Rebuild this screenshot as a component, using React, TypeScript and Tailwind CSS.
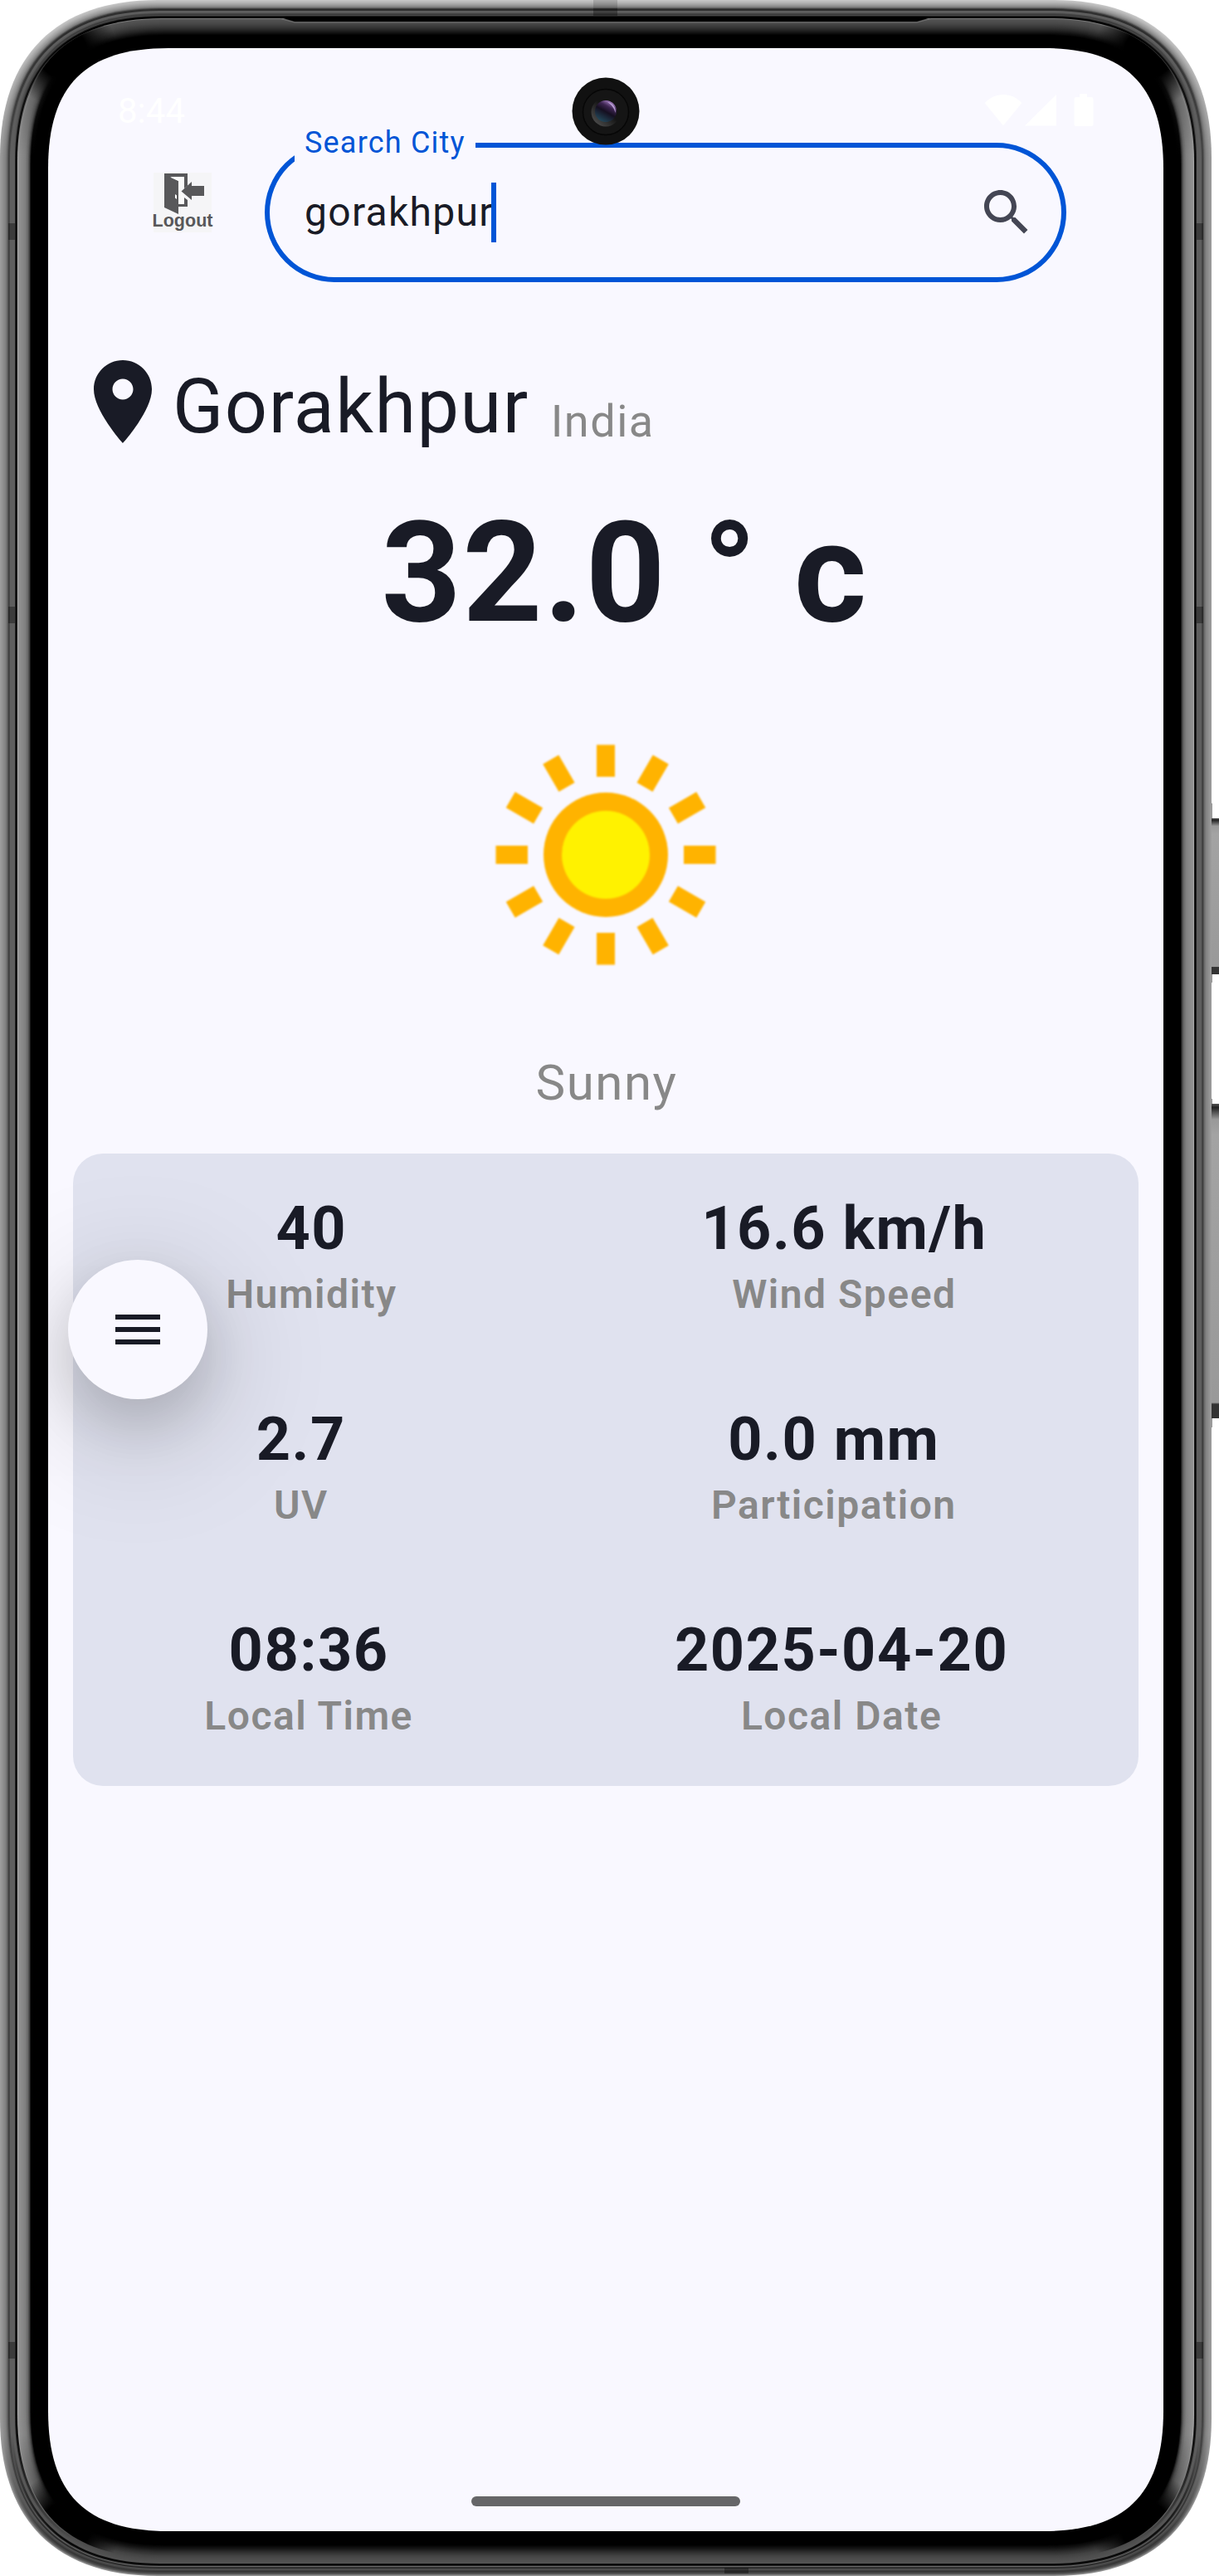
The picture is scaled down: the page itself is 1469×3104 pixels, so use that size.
import React from "react";

type Stop = [number, number];

const SIDE: Stop[] = [[0, 0x9c], [3, 0x90], [6, 0x82], [8, 0x6c], [9, 0x55], [10, 0x40], [11, 0x46], [12, 0x5e], [17, 0x5e], [18, 0x20], [19, 0], [20, 0x18], [21, 0xa8], [22, 0x92], [30, 0x80], [33, 0x68], [35, 0x40], [36, 0x1c], [37, 0], [58, 0]];
const TOP: Stop[] = [[0, 0xc6], [3, 0xb2], [6, 0x98], [8, 0x80], [9, 0x66], [10, 0x40], [11, 0x2c], [12, 0x30], [13, 0x60], [15, 0x5a], [16, 0x44], [17, 0x3a], [18, 0x48], [19, 0x20], [20, 0], [21, 0], [22, 0x78], [23, 0x54], [28, 0x48], [32, 0x38], [36, 0x24], [40, 0x0c], [42, 0], [58, 0]];
const BOTTOM: Stop[] = [[0, 0x92], [1, 0x76], [2, 0x5a], [3, 0x4a], [5, 0x34], [6, 0x40], [8, 0x50], [9, 0x24], [10, 0x36], [11, 0x66], [12, 0x22], [13, 0], [14, 0x10], [15, 0x54], [20, 0x4c], [24, 0x42], [29, 0x2a], [33, 0x12], [37, 0], [58, 0]];

function shade(stops: Stop[], i: number) {
  for (let n = 1; n < stops.length; n++) {
    if (i <= stops[n][0]) {
      const [a, va] = stops[n - 1];
      const [b, vb] = stops[n];
      const v = Math.round(va + ((vb - va) * (i - a)) / (b - a));
      return `rgb(${v},${v},${v})`;
    }
  }
  return "#000";
}

/* Rounded outline with continuous-curvature corners. */
function outline(l: number, t: number, r: number, b: number, e: number, k: number) {
  const c = e * (1 - k);
  return `M${l + e} ${t}H${r - e}C${r - c} ${t} ${r} ${t + c} ${r} ${t + e}V${b - e}C${r} ${b - c} ${r - c} ${b} ${r - e} ${b}H${l + e}C${l + c} ${b} ${l} ${b - c} ${l} ${b - e}V${t + e}C${l} ${t + c} ${l + c} ${t} ${l + e} ${t}Z`;
}

function ring(i: number) {
  return outline(i, i, 1460 - i, 3104 - i, 190 - (i * 45) / 58, 0.646 + (i * 0.044) / 58);
}

const INSETS = Array.from({ length: 43 }, (_, i) => i);
const MARKS = [269, 731, 2822];

function DeviceFrame() {
  return (
    <svg className="absolute left-0 top-0" width="1469" height="3104" viewBox="0 0 1469 3104" aria-hidden="true">
      <defs>
        {INSETS.map((i) => (
          <linearGradient key={i} id={`m${i}`} gradientUnits="userSpaceOnUse" x1="0" y1="0" x2="0" y2="3104">
            <stop offset="0.014" stopColor={shade(TOP, i)} />
            <stop offset="0.06" stopColor={shade(SIDE, i)} />
            <stop offset="0.945" stopColor={shade(SIDE, i)} />
            <stop offset="0.986" stopColor={shade(BOTTOM, i)} />
          </linearGradient>
        ))}
        <linearGradient id="key" x1="0" y1="0" x2="0" y2="1">
          <stop offset="0" stopColor="#555" />
          <stop offset="0.012" stopColor="#222" />
          <stop offset="0.05" stopColor="#999" />
          <stop offset="0.1" stopColor="#a3a3a3" />
          <stop offset="0.95" stopColor="#999" />
          <stop offset="0.955" stopColor="#333" />
          <stop offset="1" stopColor="#333" />
        </linearGradient>
        <radialGradient id="fade">
          <stop offset="0" stopColor="#000" />
          <stop offset="0.45" stopColor="#000" />
          <stop offset="1" stopColor="#000" stopOpacity="0" />
        </radialGradient>
        <clipPath id="bezel">
          <path d={ring(22)} />
        </clipPath>
      </defs>
      <rect x="1459" y="968" width="2" height="216" fill="#999" />
      <rect x="1459" y="1324" width="2" height="396" fill="#999" />
      <rect x="1460" y="986" width="9" height="188" fill="url(#key)" />
      <rect x="1460" y="1330" width="9" height="379" fill="url(#key)" />
      {INSETS.map((i) => (
        <path key={i} d={ring(i)} fill={`url(#m${i})`} />
      ))}
      <g clipPath="url(#bezel)">
        <circle cx="76" cy="64" r="66" fill="url(#fade)" />
        <circle cx="1384" cy="64" r="66" fill="url(#fade)" />
        <circle cx="80" cy="3044" r="66" fill="url(#fade)" />
        <circle cx="1380" cy="3044" r="66" fill="url(#fade)" />
      </g>
      <path d="M338 21H1122L1105 26H355Z" fill="#000" />
      <path d="M338 22.5L355 27H1105L1122 22.5" fill="none" stroke="#6e6e6e" strokeWidth="1.2" />
      {MARKS.map((y) => (
        <g key={y} fill="#000" fillOpacity="0.36">
          <rect x="10" y={y} width="8" height="20" />
          <rect x="1442" y={y} width="8" height="20" />
        </g>
      ))}
      <rect x="715" y="0" width="29" height="10" fill="#000" fillOpacity="0.14" />
      <rect x="715" y="10" width="29" height="9" fill="#000" fillOpacity="0.32" />
      <rect x="873" y="3094" width="29" height="7" fill="#000" fillOpacity="0.36" />
      <path d={outline(58, 58, 1402, 3050, 145, 0.69)} fill="#f9f8ff" />
    </svg>
  );
}

function Camera() {
  return (
    <svg className="absolute left-[631px] top-[35px]" width="82" height="82" viewBox="-41 -41 82 82" aria-hidden="true">
      <defs>
        <linearGradient id="lens" x1="0.8" y1="0.1" x2="0.3" y2="1">
          <stop offset="0" stopColor="#a07abc" />
          <stop offset="0.25" stopColor="#3c2450" />
          <stop offset="0.5" stopColor="#150f20" />
          <stop offset="1" stopColor="#234a5c" />
        </linearGradient>
        <linearGradient id="rim" x1="0" y1="1" x2="1" y2="0">
          <stop offset="0" stopColor="#5a5a5a" />
          <stop offset="0.55" stopColor="#151515" />
        </linearGradient>
      </defs>
      <circle r="40.5" fill="#111" />
      <circle cy="1" r="27.5" fill="#151515" stroke="#060606" strokeWidth="1.4" />
      <circle cy="1" r="17.5" fill="url(#rim)" />
      <circle r="13" fill="url(#lens)" />
      <path d="M2 -11A11 11 0 0 1 11.5 2C10 -4 7 -8 2 -11Z" fill="#cdb6ea" fillOpacity="0.8" />
    </svg>
  );
}

function StatusBar() {
  return (
    <div className="flex h-[114px] shrink-0 items-start justify-between pl-[84px] pr-[84px] pt-[55px] text-white">
      <span className="text-[42px] leading-[42px]">8:44</span>
      <svg width="132" height="40" viewBox="0 0 132 40" fill="currentColor" aria-hidden="true">
        <path d="M23 38.500L.5 11C7 4.500 14.500 1 23 1S39 4.500 45.500 11Z" />
        <path d="M49 38.500H87V1Z" />
        <path d="M115 0H124V4H129Q131.500 4 131.500 6.500V36.500Q131.500 39 129 39H111Q108.500 39 108.500 36.500V6.500Q108.500 4 111 4H115Z" />
      </svg>
    </div>
  );
}

function LogoutButton() {
  return (
    <button className="mt-9 flex h-[72px] w-[70px] shrink-0 flex-col items-center self-start bg-[#f5f5f7] text-[#58585a]">
      <svg className="h-[50px] w-[70px] shrink-0" viewBox="0 0 70 50" aria-hidden="true">
        <path d="M13 1H41V16L37 19V5H20L30 10V38H37V30L41 33V41H30V50L13 42Z" fill="currentColor" />
        <path d="M30 10V37H36.500V29L32.500 22L36.500 16V6H21Z" fill="#fafafa" />
        <path d="M33.500 22.500L46 11V16H61V28H46V33Z" fill="currentColor" />
        <path d="M26 26L28 27.500V32L26 30.500Z" fill="#fff" />
      </svg>
      <span className="font-['Liberation_Sans',sans-serif] text-[21.500px] font-bold leading-[17px]">Logout</span>
    </button>
  );
}

function SearchField() {
  return (
    <div className="relative flex h-[168px] w-[966px] items-center justify-between rounded-full border-[6px] border-[#0055d6] pl-[42px] pr-[30px]">
      <div className="absolute -top-[30px] left-[30px] h-12 w-[218px] bg-[#f9f8ff] pl-3 text-[36px] leading-[48px] tracking-[1.2px] text-[#0055d6]">
        Search City
      </div>
      <div className="flex h-[72px] items-center">
        <span className="text-[48px] leading-[72px] tracking-[1.3px] text-[#191b26]">gorakhpur</span>
        <span className="-ml-[3px] h-[72px] w-[6px] bg-[#0055d6]" />
      </div>
      <svg width="72" height="72" viewBox="0 0 24 24" fill="#444654" aria-hidden="true">
        <path d="M15.500 14h-.79l-.28-.27C15.410 12.590 16 11.110 16 9.500 16 5.910 13.090 3 9.500 3S3 5.910 3 9.500 5.910 16 9.500 16c1.610 0 3.090-.59 4.230-1.570l.27.28v.79l5 4.990L20.490 19l-4.990-5zm-6 0C7.010 14 5 11.990 5 9.500S7.010 5 9.500 5 14 7.010 14 9.500 11.990 14 9.500 14z" />
      </svg>
    </div>
  );
}

const RAYS = Array.from({ length: 12 }, (_, i) => i * 30);

function Sun() {
  return (
    <svg className="shrink-0 self-center blur-[0.8px]" width="480" height="480" viewBox="-240 -241 480 480" aria-hidden="true">
      {RAYS.map((a) => (
        <rect key={a} x="-11" y="-132.500" width="22" height="38.500" fill="#ffb300" transform={`rotate(${a})`} />
      ))}
      <circle r="75" fill="#ffb300" />
      <circle r="53" fill="#fff200" />
    </svg>
  );
}

function Metric({ value, label }: { value: string; label: string }) {
  return (
    <div className="flex flex-col items-center p-12 font-bold tracking-[1.5px]">
      <span className="pl-[1.5px] text-[72px] leading-[86px] text-[#191b26]">{value}</span>
      <span className="pl-[1.5px] text-[48px] font-semibold leading-[72px] text-[#888888]">{label}</span>
    </div>
  );
}

const METRICS = [
  [["40", "Humidity"], ["16.6 km/h", "Wind Speed"]],
  [["2.7", "UV"], ["0.0 mm", "Participation"]],
  [["08:36", "Local Time"], ["2025-04-20", "Local Date"]],
];

export default function App() {
  return (
    <div className="relative h-[3104px] w-[1469px] overflow-hidden bg-white pl-[58px] pt-[58px] font-[Roboto,sans-serif]">
      <DeviceFrame />
      <main className="relative flex h-[2992px] w-[1344px] flex-col overflow-hidden">
        <StatusBar />
        <div className="flex h-[168px] shrink-0 gap-16 pl-[127px]">
          <LogoutButton />
          <SearchField />
        </div>

        <div className="mt-[84px] flex h-[120px] shrink-0 items-end pl-[30px] tracking-[1.5px]">
          <svg width="120" height="120" viewBox="0 0 24 24" fill="#191b26" aria-hidden="true">
            <path d="M12 2C8.130 2 5 5.130 5 9c0 5.250 7 13 7 13s7-7.750 7-13c0-3.870-3.130-7-7-7zm0 9.500c-1.380 0-2.500-1.120-2.500-2.500s1.120-2.500 2.500-2.500 2.500 1.120 2.500 2.500-1.120 2.500-2.500 2.500z" />
          </svg>
          <h1 className="text-[90px] leading-[106px] text-[#191b26]">Gorakhpur</h1>
          <span className="ml-[26px] text-[54px] leading-[72px] text-[#888888]">India</span>
        </div>

        <p className="mt-12 shrink-0 whitespace-pre pl-[2px] text-center text-[168px] font-bold leading-[197px] tracking-[1.5px] text-[#191b26]">
          {" 32.0 ° c"}
        </p>
        <Sun />
        <p className="shrink-0 pl-[2px] text-center text-[60px] leading-[72px] tracking-[1.5px] text-[#888888]">Sunny</p>

        <section className="mx-[30px] mt-[49px] flex shrink-0 flex-col rounded-[36px] bg-[#e0e2ef]">
          {METRICS.map((row) => (
            <div key={row[0][1]} className="flex h-[254px] justify-around">
              {row.map(([value, label]) => (
                <Metric key={label} value={value} label={label} />
              ))}
            </div>
          ))}
        </section>

        <button
          aria-label="Menu"
          className="absolute left-[24px] top-[1460px] flex size-[168px] items-center justify-center rounded-full bg-[#f9f8ff] shadow-[0_36px_140px_20px_rgba(0,0,0,0.15),0_28px_64px_rgba(0,0,0,0.14)]"
        >
          <svg width="72" height="72" viewBox="0 0 24 24" fill="#191b26" aria-hidden="true">
            <path d="M3 18h18v-2H3v2zm0-5h18v-2H3v2zm0-7v2h18V6H3z" />
          </svg>
        </button>

        <div className="mb-[30px] mt-auto h-3 w-[324px] shrink-0 self-center rounded-full bg-[#666668]" />
        <Camera />
      </main>
    </div>
  );
}
